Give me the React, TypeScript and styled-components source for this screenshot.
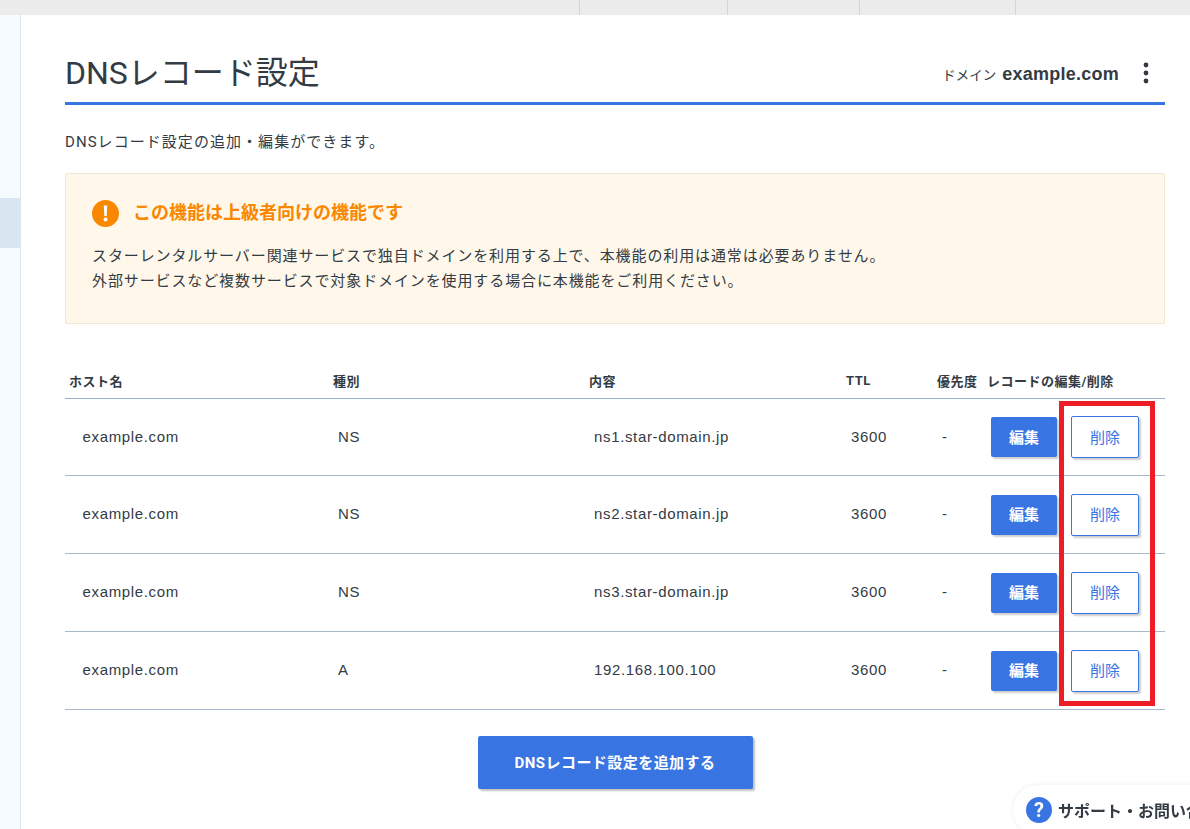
import React from 'react'
import styled, { createGlobalStyle } from 'styled-components'

const FONT = `Roboto, 'Noto Sans CJK JP', sans-serif`
const BLUE = '#3974e3'
const TEXT = '#333b44'

const GlobalStyle = createGlobalStyle`
    html, body {
        margin: 0;
        height: 100%;
        overflow: hidden;
        background: #fff;
    }
    body {
        font-family: ${FONT};
        color: ${TEXT};
    }
`

const TopBar = styled.div`
    display: grid;
    grid-template-columns: 580px 148px 132px 156px 1fr;
    height: 15px;
    background: #ececec;
`

const TopTab = styled.div`
    border-right: solid 1px #d6d6d6;
    &:last-child {
        border-right: none;
    }
`

const Wrapper = styled.div`
    display: flex;
    flex-direction: row;
    height: 814px;
`

const Sidebar = styled.div`
    box-sizing: border-box;
    width: 21px;
    padding-top: 183px;
    background: #f5fbff;
    border-right: solid 1px #dde5ec;
`

const SidebarActive = styled.div`
    height: 50px;
    background: #d9e6f1;
`

const Main = styled.div`
    flex: 1;
    padding: 0 25px 0 44px;
`

const PageHeader = styled.div`
    display: flex;
    flex-direction: row;
    align-items: center;
    box-sizing: border-box;
    height: 90px;
    padding-top: 29px;
    border-bottom: solid 3px ${BLUE};
`

const Title = styled.h1`
    flex: 1;
    margin: 0;
    font-size: 32px;
    font-weight: 400;
    line-height: 1;
`

const DomainLabel = styled.span`
    font-size: 13.5px;
    margin: 2px 6px 0 0;
`

const DomainName = styled.span`
    font-family: 'Liberation Sans', sans-serif;
    font-size: 18px;
    font-weight: 700;
    letter-spacing: 0.25px;
    margin-top: 2px;
`

const MenuDots = styled.svg`
    width: 6px;
    height: 22px;
    margin: 0 16px 0 24px;
`

const Lead = styled.p`
    margin: 27px 0 21px;
    font-size: 15px;
    line-height: 20px;
    letter-spacing: 1.05px;
`

const Notice = styled.div`
    box-sizing: border-box;
    height: 151px;
    padding: 26px 26px;
    background: #fff8ea;
    border: solid 1px #f2e8d2;
    border-radius: 2px;
`

const NoticeHead = styled.div`
    display: flex;
    flex-direction: row;
    align-items: center;
    gap: 14px;
    height: 27px;
    margin-bottom: 17px;
`

const NoticeTitle = styled.div`
    font-size: 18px;
    font-weight: 700;
    color: #f98700;
    padding-bottom: 5px;
`

const NoticeLine = styled.div`
    font-size: 15px;
    line-height: 25px;
    letter-spacing: 0.89px;
`

const Table = styled.div`
    margin-top: 42px;
`

const Row = styled.div`
    display: grid;
    grid-template-columns: 264px 256px 257px 91px 50px 1fr;
    align-items: center;
    box-sizing: border-box;
    height: 78px;
    border-bottom: solid 1px #a9b9cb;
    &:first-child {
        height: 33px;
        border-bottom-color: #94b1d0;
    }
    &:nth-child(2) {
        height: 77px;
    }
`

const HeadCell = styled.div`
    padding-left: 4px;
    font-size: 13px;
    font-weight: 700;
    letter-spacing: 0.5px;
    white-space: nowrap;
    margin-top: -3px;
`

const Cell = styled.div<{ $first?: boolean }>`
    padding-left: ${p => (p.$first ? '17.5px' : '9px')};
    font-family: 'Liberation Sans', sans-serif;
    font-size: 15px;
    letter-spacing: 0.65px;
    margin-top: -2px;
`

const Actions = styled.div`
    display: flex;
    flex-direction: row;
    align-items: center;
    gap: 14px;
    padding-left: 8px;
`

const EditButton = styled.button`
    width: 66px;
    height: 40px;
    padding: 0 0 2px;
    border: none;
    border-radius: 2px;
    background: ${BLUE};
    color: #fff;
    font-family: ${FONT};
    font-size: 15px;
    font-weight: 700;
    box-shadow: 2px 2px 2px rgba(0, 0, 0, 0.2);
`

const DeleteButton = styled.button`
    box-sizing: border-box;
    width: 68px;
    height: 42px;
    padding: 0 0 2px;
    border: solid 1px ${BLUE};
    border-radius: 2px;
    background: #fff;
    color: ${BLUE};
    font-family: ${FONT};
    font-size: 15px;
    box-shadow: 2px 2px 2px rgba(0, 0, 0, 0.2);
`

const AddRow = styled.div`
    display: flex;
    justify-content: center;
    margin-top: 26px;
`

const AddButton = styled.button`
    width: 275px;
    height: 53px;
    padding: 0 0 2px;
    border: none;
    border-radius: 2px;
    background: ${BLUE};
    color: #fff;
    font-family: ${FONT};
    font-size: 15px;
    font-weight: 700;
    letter-spacing: 0.45px;
    box-shadow: 2px 2px 2px rgba(0, 0, 0, 0.25);
`

const Highlight = styled.div`
    position: absolute;
    left: 1059px;
    top: 401px;
    width: 96px;
    height: 305px;
    box-sizing: border-box;
    border: solid 5px #ee1c25;
    pointer-events: none;
`

const SupportTab = styled.div`
    position: fixed;
    left: 1013px;
    top: 785px;
    display: flex;
    flex-direction: row;
    align-items: center;
    gap: 6px;
    width: 240px;
    height: 50px;
    padding-left: 13px;
    box-sizing: border-box;
    background: #fff;
    border-radius: 25px 0 0 25px;
    box-shadow: 0 0 5px rgba(0, 0, 0, 0.08);
    font-size: 16px;
    font-weight: 700;
    white-space: nowrap;
`

const records = [
    { host: 'example.com', type: 'NS', value: 'ns1.star-domain.jp' },
    { host: 'example.com', type: 'NS', value: 'ns2.star-domain.jp' },
    { host: 'example.com', type: 'NS', value: 'ns3.star-domain.jp' },
    { host: 'example.com', type: 'A', value: '192.168.100.100' },
]

const App = () => {
    return (
        <>
            <GlobalStyle />
            <TopBar>
                <TopTab />
                <TopTab />
                <TopTab />
                <TopTab />
                <TopTab />
            </TopBar>
            <Wrapper>
                <Sidebar>
                    <SidebarActive />
                </Sidebar>
                <Main>
                    <PageHeader>
                        <Title>DNSレコード設定</Title>
                        <DomainLabel>ドメイン</DomainLabel>
                        <DomainName>example.com</DomainName>
                        <MenuDots viewBox="0 0 6 22">
                            <circle cx="3" cy="3" r="2.4" fill={TEXT} />
                            <circle cx="3" cy="11" r="2.4" fill={TEXT} />
                            <circle cx="3" cy="19" r="2.4" fill={TEXT} />
                        </MenuDots>
                    </PageHeader>
                    <Lead>DNSレコード設定の追加・編集ができます。</Lead>
                    <Notice>
                        <NoticeHead>
                            <svg width="27" height="27" viewBox="0 0 27 27">
                                <circle cx="13.5" cy="13.5" r="13.5" fill="#f98700" />
                                <path d="M11.8 5.5h3.4l-.5 10.5h-2.4z" fill="#fff" />
                                <circle cx="13.5" cy="19.6" r="2" fill="#fff" />
                            </svg>
                            <NoticeTitle>この機能は上級者向けの機能です</NoticeTitle>
                        </NoticeHead>
                        <NoticeLine>スターレンタルサーバー関連サービスで独自ドメインを利用する上で、本機能の利用は通常は必要ありません。</NoticeLine>
                        <NoticeLine>外部サービスなど複数サービスで対象ドメインを使用する場合に本機能をご利用ください。</NoticeLine>
                    </Notice>
                    <Table>
                        <Row>
                            <HeadCell>ホスト名</HeadCell>
                            <HeadCell>種別</HeadCell>
                            <HeadCell>内容</HeadCell>
                            <HeadCell>TTL</HeadCell>
                            <HeadCell>優先度</HeadCell>
                            <HeadCell>レコードの編集/削除</HeadCell>
                        </Row>
                        {records.map(r => (
                            <Row key={r.value}>
                                <Cell $first>{r.host}</Cell>
                                <Cell>{r.type}</Cell>
                                <Cell>{r.value}</Cell>
                                <Cell>3600</Cell>
                                <Cell>-</Cell>
                                <Actions>
                                    <EditButton>編集</EditButton>
                                    <DeleteButton>削除</DeleteButton>
                                </Actions>
                            </Row>
                        ))}
                    </Table>
                    <AddRow>
                        <AddButton>DNSレコード設定を追加する</AddButton>
                    </AddRow>
                </Main>
            </Wrapper>
            <Highlight />
            <SupportTab>
                <svg width="26" height="26" viewBox="0 0 26 26">
                    <circle cx="13" cy="13" r="13" fill={BLUE} />
                    <text x="13" y="20" textAnchor="middle" fontSize="20" fontWeight="700" fill="#fff" fontFamily="Roboto, sans-serif">?</text>
                </svg>
                サポート・お問い合わせ
            </SupportTab>
        </>
    )
}

export default App
